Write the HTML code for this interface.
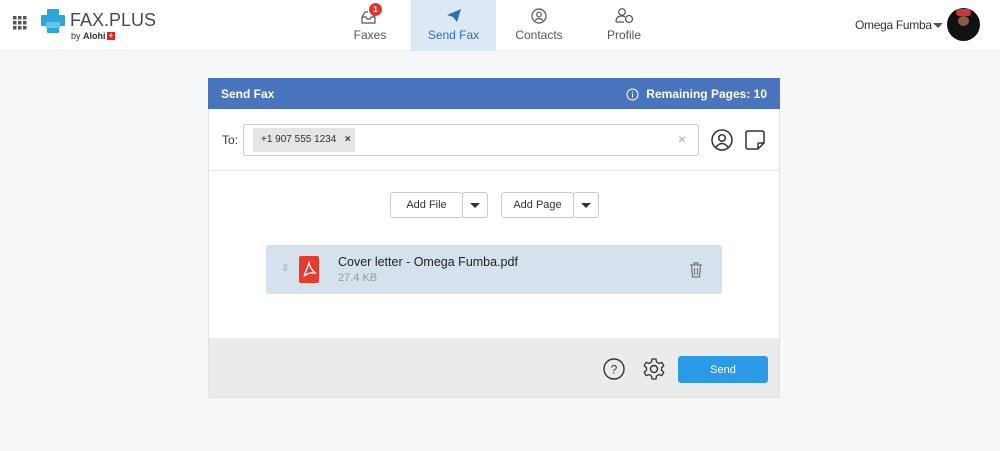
<!DOCTYPE html>
<html><head><meta charset="utf-8"><style>
*{margin:0;padding:0;box-sizing:border-box}
body{width:1000px;height:451px;background:#f6f7f9;font-family:"Liberation Sans",sans-serif;position:relative;overflow:hidden;color:#333}
.a{position:absolute}
.hdr{left:0;top:0;width:1000px;height:51px;background:#fff;border-bottom:1px solid #ececec}
.nav{top:0;height:51px;text-align:center;font-size:12px;color:#555}
.nav span{position:absolute;left:0;right:0;top:28px}
.btn{background:#fff;border:1px solid #ccc;border-radius:3px;height:26px;font-size:11px;color:#333;display:flex;align-items:center;justify-content:center}
.car{width:0;height:0;border-left:5px solid transparent;border-right:5px solid transparent;border-top:5px solid #333}
</style></head><body>
<div class="a hdr"></div>
<svg class="a" style="left:13px;top:16px" width="14" height="14"><g fill="#555"><rect x="0" y="0" width="3.5" height="3.5"/><rect x="5" y="0" width="3.5" height="3.5"/><rect x="10" y="0" width="3.5" height="3.5"/><rect x="0" y="5" width="3.5" height="3.5"/><rect x="5" y="5" width="3.5" height="3.5"/><rect x="10" y="5" width="3.5" height="3.5"/><rect x="0" y="10" width="3.5" height="3.5"/><rect x="5" y="10" width="3.5" height="3.5"/><rect x="10" y="10" width="3.5" height="3.5"/></g></svg>
<svg class="a" style="left:40px;top:8px" width="26" height="26"><path d="M8 2h10v6h6v9h-6v7H8v-7H2V8h6z" fill="#2ea6d9" stroke="#2ea6d9" stroke-width="2" stroke-linejoin="round"/><rect x="6" y="14" width="14" height="6" fill="#69c4ea"/></svg>
<div class="a" style="left:70px;top:10px;font-size:18px;color:#4a4a4a">FAX.PLUS</div>
<div class="a" style="left:71px;top:31px;font-size:9px;color:#333">by <b>Alohi</b></div>
<div class="a" style="left:107px;top:32px;width:8px;height:8px;background:#e2231a;color:#fff;font-size:8px;line-height:8px;text-align:center;font-weight:bold">+</div>

<div class="a nav" style="left:340px;width:60px"><svg class="a" style="left:20px;top:9px" width="20" height="16"><path d="M2 8v6h13V8M2 8l3-5h3M15 8l-2-3M2 8h4l1 2h3l1-2h4" fill="none" stroke="#555" stroke-width="1.2"/></svg><div class="a" style="left:29px;top:3px;width:13px;height:13px;border-radius:50%;background:#d9382d;color:#fff;font-size:8px;line-height:13px;font-weight:bold">1</div><span>Faxes</span></div>
<div class="a nav" style="left:411px;width:85px;background:#dce8f4;color:#2e6fb5"><svg class="a" style="left:35px;top:8px" width="16" height="15"><path d="M1 7L15 1L11 14L7 9z" fill="#2e6fb5"/></svg><span>Send Fax</span></div>
<div class="a nav" style="left:509px;width:60px"><svg class="a" style="left:22px;top:8px" width="16" height="16"><circle cx="8" cy="8" r="7" fill="none" stroke="#555" stroke-width="1.2"/><circle cx="8" cy="6.5" r="2.3" fill="none" stroke="#555" stroke-width="1.2"/><path d="M4 12.5q4-4 8 0" fill="none" stroke="#555" stroke-width="1.2"/></svg><span>Contacts</span></div>
<div class="a nav" style="left:594px;width:60px"><svg class="a" style="left:21px;top:7px" width="20" height="17"><circle cx="7" cy="5" r="3.3" fill="none" stroke="#555" stroke-width="1.2"/><path d="M1 15q0-6 6-6q2 0 3 1M1 15h8" fill="none" stroke="#555" stroke-width="1.2"/><circle cx="14" cy="12" r="3.5" fill="none" stroke="#555" stroke-width="1.2"/></svg><span>Profile</span></div>

<div class="a" style="left:855px;top:18px;font-size:12px;color:#333;letter-spacing:-0.3px">Omega Fumba</div>
<div class="a car" style="left:933px;top:23px;border-top-color:#555"></div>
<div class="a" style="left:947px;top:8px;width:33px;height:33px;border-radius:50%;background:#111;overflow:hidden"><div style="margin:1px 0 0 9px;width:15px;height:7px;background:#c8383a;border-radius:3px"></div><div style="margin:0 0 0 11px;width:11px;height:10px;background:#8a5a48;border-radius:50%"></div></div>

<div class="a" style="left:208px;top:78px;width:572px;height:320px;background:#fff;border:1px solid #e2e2e2"></div>
<div class="a" style="left:208px;top:78px;width:572px;height:31px;background:#4b74bf;color:#fff;font-size:12px;font-weight:bold"><span class="a" style="left:13px;top:9px">Send Fax</span><span class="a" style="right:13px;top:9px;display:flex;align-items:center;gap:7px"><svg width="13" height="13"><circle cx="6.5" cy="6.5" r="5.5" fill="none" stroke="#fff"/><path d="M6.5 5.5v4M6.5 3.5v1" stroke="#fff"/></svg>Remaining Pages: 10</span></div>
<div class="a" style="left:222px;top:133px;font-size:12px">To:</div>
<div class="a" style="left:243px;top:124px;width:456px;height:32px;border:1px solid #ccc;border-radius:3px;background:#fff"></div>
<div class="a" style="left:253px;top:128px;width:102px;height:24px;background:#e5e5e5;font-size:10px;line-height:24px;padding-left:8px">+1 907 555 1234 &nbsp;&nbsp;<b>×</b></div>
<div class="a" style="left:678px;top:131px;font-size:14px;color:#aaa">×</div>
<svg class="a" style="left:711px;top:129px" width="22" height="22"><circle cx="11" cy="11" r="10" fill="none" stroke="#333" stroke-width="1.5"/><circle cx="11" cy="9" r="3.3" fill="none" stroke="#333" stroke-width="1.5"/><path d="M5 18q6-7 12 0" fill="none" stroke="#333" stroke-width="1.5"/></svg>
<svg class="a" style="left:745px;top:130px" width="21" height="21"><path d="M3 1h14q2 0 2 2v10l-6 6H3q-2 0-2-2V3q0-2 2-2zM19 13h-5q-1 0-1 1v5" fill="none" stroke="#333" stroke-width="1.5" stroke-linejoin="round"/></svg>
<div class="a" style="left:209px;top:170px;width:570px;height:1px;background:#e6e6e6"></div>

<div class="a btn" style="left:390px;top:192px;width:73px">Add File</div>
<div class="a btn" style="left:462px;top:192px;width:26px"><div class="car"></div></div>
<div class="a btn" style="left:501px;top:192px;width:73px">Add Page</div>
<div class="a btn" style="left:573px;top:192px;width:26px"><div class="car"></div></div>

<div class="a" style="left:266px;top:245px;width:456px;height:49px;background:#d5e2ee;border-radius:3px"></div>
<div class="a" style="left:281px;top:263px;font-size:10px;color:#999">⇳</div>
<div class="a" style="left:299px;top:256px;width:20px;height:27px;background:#e43d2e;border-radius:2px"><svg width="20" height="27"><path d="M5 20q4-10 5-13q1 5 6 10q-6-1-11 3" fill="none" stroke="#fff" stroke-width="1.3"/></svg></div>
<div class="a" style="left:338px;top:255px;font-size:12.5px;color:#222">Cover letter - Omega Fumba.pdf</div>
<div class="a" style="left:338px;top:272px;font-size:11px;color:#999">27.4 KB</div>
<svg class="a" style="left:689px;top:262px" width="14" height="16"><path d="M1 3h12M5 3V1h4v2M2.5 3l1 12h7l1-12M5.5 6v7M8.5 6v7" fill="none" stroke="#777" stroke-width="1.2"/></svg>

<div class="a" style="left:209px;top:338px;width:570px;height:59px;background:#ebebeb"></div>
<svg class="a" style="left:603px;top:358px" width="22" height="22"><circle cx="11" cy="11" r="10" fill="none" stroke="#333" stroke-width="1.4"/><text x="11" y="15.5" font-size="12" text-anchor="middle" fill="#333" font-family="Liberation Sans">?</text></svg>
<svg class="a" style="left:643px;top:358px" width="22" height="22"><circle cx="11" cy="11" r="3.5" fill="none" stroke="#333" stroke-width="1.4"/><path d="M9 1h4l.5 3 2.5 1.5 2.8-1.2 2 3.4-2.3 2v2.6l2.3 2-2 3.4-2.8-1.2-2.5 1.5L13 21H9l-.5-3L6 16.5l-2.8 1.2-2-3.4 2.3-2V9.7l-2.3-2 2-3.4L6 5.5 8.5 4z" fill="none" stroke="#333" stroke-width="1.3" stroke-linejoin="round"/></svg>
<div class="a" style="left:678px;top:356px;width:90px;height:27px;background:#2b9be8;border-radius:3px;color:#fff;font-size:11px;display:flex;align-items:center;justify-content:center">Send</div>
</body></html>
